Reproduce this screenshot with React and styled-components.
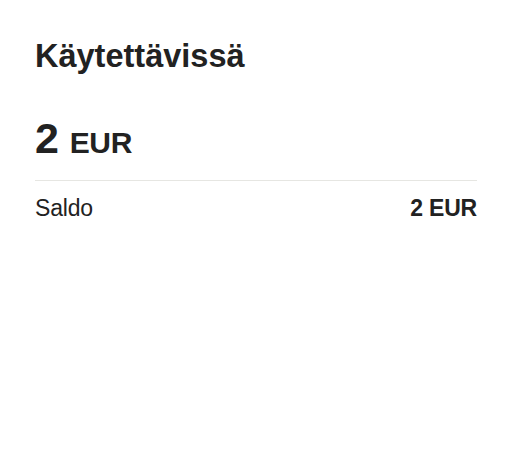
import React from "react";
import styled, { createGlobalStyle } from "styled-components";

const Global = createGlobalStyle`
  html, body { margin: 0; padding: 0; background: #fff; }
  body { font-family: "Liberation Sans", Arial, sans-serif; color: #222; }
`;

const Card = styled.section`
  padding: 36px 35px 0 35px;
  display: flex;
  flex-direction: column;
`;

const Title = styled.h2`
  margin: 0;
  font-size: 32.5px;
  line-height: 40px;
  font-weight: 700;
  letter-spacing: 0;
  color: #222;
`;

const Amount = styled.div`
  margin-top: 41px;
  display: flex;
  align-items: baseline;
  gap: 11px;
  font-weight: 700;
  color: #222;
  padding-bottom: 20px;
  border-bottom: 1px solid #e6e6e2;
`;

const Big = styled.span`
  font-size: ${(p) => p.$size}px;
  line-height: 1;
  letter-spacing: -0.3px;
`;

const Row = styled.div`
  display: flex;
  justify-content: space-between;
  align-items: baseline;
  margin-top: 14px;
  font-size: 23px;
  line-height: 26px;
  letter-spacing: -0.2px;
  color: #222;
`;

const Value = styled.span`
  font-weight: 700;
`;

export default function App() {
  return (
    <>
      <Global />
      <Card>
        <Title>Käytettävissä</Title>
        <Amount>
          <Big $size={43}>2</Big>
          <Big $size={30}>EUR</Big>
        </Amount>
        <Row>
          <span>Saldo</span>
          <Value>2 EUR</Value>
        </Row>
      </Card>
    </>
  );
}
